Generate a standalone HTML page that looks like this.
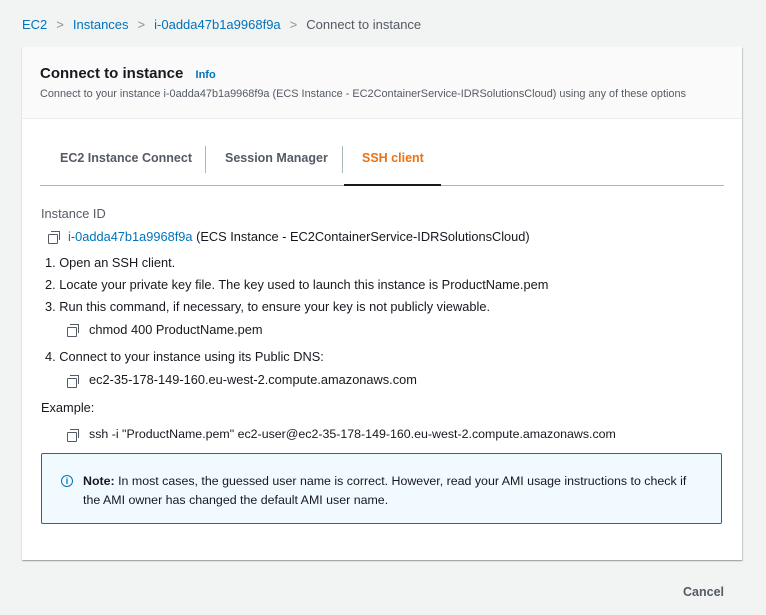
<!DOCTYPE html>
<html><head><style>
body{margin:0;width:766px;height:615px;background:#f2f3f3;font-family:"Liberation Sans",sans-serif;color:#16191f;position:relative;overflow:hidden}
.a{position:absolute;white-space:nowrap}
.lk{color:#0073bb}
.chev{color:#879596;margin:0 9px}
.card{position:absolute;left:22px;top:47px;width:720px;height:513px;background:#fff;box-shadow:0 1px 1px rgba(0,28,36,.3),1px 1px 1px rgba(0,28,36,.15)}
.hdr{position:absolute;left:0;top:0;width:720px;height:71px;background:#fafafa;border-bottom:1px solid #eaeded}
.cp{position:absolute;width:8px;height:8px;border:1.5px solid #545b64;background:#fff;border-radius:1px}
.cp:before{content:"";position:absolute;left:1.5px;top:-4.5px;width:8px;height:8px;border-top:1.5px solid #545b64;border-right:1.5px solid #545b64}
.t{font-size:12.8px}
</style></head><body>
<div class="a" style="left:22px;top:17px;font-size:13px"><span class="lk">EC2</span><span class="chev">&gt;</span><span class="lk">Instances</span><span class="chev">&gt;</span><span class="lk">i-0adda47b1a9968f9a</span><span class="chev">&gt;</span><span style="color:#545b64">Connect to instance</span></div>
<div class="card">
<div class="hdr">
<div class="a" style="left:18px;top:18px;font-size:15px;font-weight:bold">Connect to instance <span class="lk" style="font-size:11px;margin-left:8px">Info</span></div>
<div class="a" style="left:18px;top:41px;font-size:10.9px;color:#545b64">Connect to your instance i-0adda47b1a9968f9a (ECS Instance - EC2ContainerService-IDRSolutionsCloud) using any of these options</div>
</div>
<div class="a" style="left:38px;top:104px;font-size:12.5px;font-weight:bold;color:#545b64">EC2 Instance Connect</div>
<div class="a" style="left:183px;top:99px;width:1px;height:27px;background:#aab7b8"></div>
<div class="a" style="left:203px;top:104px;font-size:12.5px;font-weight:bold;color:#545b64">Session Manager</div>
<div class="a" style="left:320px;top:99px;width:1px;height:27px;background:#aab7b8"></div>
<div class="a" style="left:340px;top:104px;font-size:12.5px;font-weight:bold;color:#ec7211">SSH client</div>
<div class="a" style="left:18px;top:138px;width:684px;height:1px;background:#aab7b8"></div>
<div class="a" style="left:322px;top:137px;width:97px;height:2px;background:#16191f"></div>
<div class="a t" style="left:19px;top:159px;color:#545b64">Instance ID</div>
<div class="cp" style="left:26px;top:187px"></div>
<div class="a t" style="left:46px;top:182px"><span class="lk">i-0adda47b1a9968f9a</span> (ECS Instance - EC2ContainerService-IDRSolutionsCloud)</div>
<div class="a t" style="left:23px;top:208px">1. Open an SSH client.</div>
<div class="a t" style="left:23px;top:230px">2. Locate your private key file. The key used to launch this instance is ProductName.pem</div>
<div class="a t" style="left:23px;top:252px">3. Run this command, if necessary, to ensure your key is not publicly viewable.</div>
<div class="cp" style="left:45px;top:280px"></div>
<div class="a t" style="left:67px;top:275px">chmod 400 ProductName.pem</div>
<div class="a t" style="left:23px;top:302px">4. Connect to your instance using its Public DNS:</div>
<div class="cp" style="left:45px;top:331px"></div>
<div class="a t" style="left:67px;top:325px">ec2-35-178-149-160.eu-west-2.compute.amazonaws.com</div>
<div class="a t" style="left:19px;top:353px">Example:</div>
<div class="cp" style="left:45px;top:385px"></div>
<div class="a" style="left:67px;top:380px;font-size:12.4px">ssh -i "ProductName.pem" ec2-user@ec2-35-178-149-160.eu-west-2.compute.amazonaws.com</div>
<div class="a" style="left:19px;top:406px;width:679px;height:69px;background:#f1faff;border:1px solid #0073bb;border-radius:2px"></div>
<div class="a" style="left:39px;top:428px;width:10px;height:10px;border:1.5px solid #0073bb;border-radius:50%;font-size:9px;font-weight:bold;color:#0073bb;text-align:center;line-height:10px">i</div>
<div class="a" style="left:61px;top:425px;font-size:12.4px;line-height:19px">
<b>Note:</b> In most cases, the guessed user name is correct. However, read your AMI usage instructions to check if<br>the AMI owner has changed the default AMI user name.</div>
</div>
<div class="a" style="left:683px;top:585px;font-size:12.5px;font-weight:bold;color:#545b64">Cancel</div>
</body></html>
